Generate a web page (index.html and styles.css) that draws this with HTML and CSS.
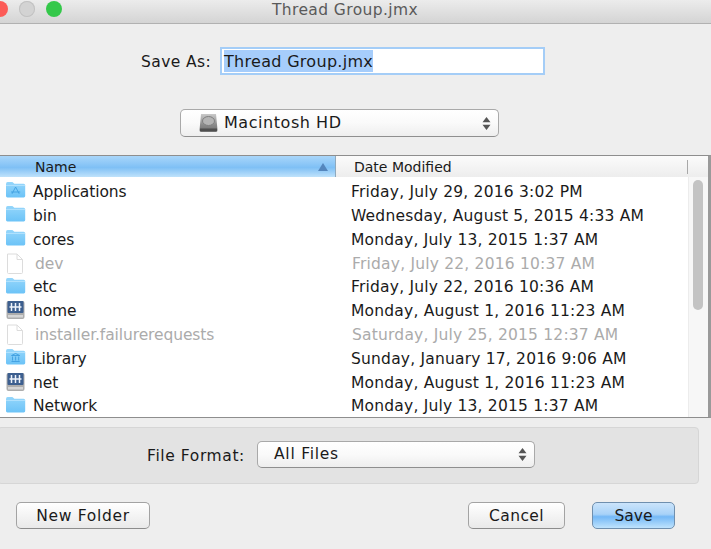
FILE: index.html
```html
<!DOCTYPE html>
<html lang="en">
<head>
<meta charset="utf-8">
<title>Thread Group.jmx</title>
<link rel="stylesheet" href="styles.css">
</head>
<body>
<svg class="defs" width="0" height="0" aria-hidden="true">
  <defs>
    <linearGradient id="fg" x1="0" y1="0" x2="0" y2="1"><stop offset="0" stop-color="#94d6fb"/><stop offset="1" stop-color="#6cc3f7"/></linearGradient>
    <linearGradient id="dg" x1="0" y1="0" x2="0" y2="1"><stop offset="0" stop-color="#c9c9c9"/><stop offset=".6" stop-color="#8b8b8b"/><stop offset="1" stop-color="#6e6e6e"/></linearGradient>
    <symbol id="folder" viewBox="0 0 21 17"><path d="M1 3.2Q1 1 2.6 1H7.4L9.4 2.8H18.6Q20.2 2.8 20.2 4.4V15Q20.2 16.4 18.8 16.4H2.4Q1 16.4 1 15Z" fill="url(#fg)"/><path d="M1 4.4H20.2" stroke="#b5e4fd" stroke-width="1"/></symbol>
    <symbol id="folder-apps" viewBox="0 0 21 17"><use href="#folder"/><path d="M10.600 6L7 12.800M10.600 6L14.200 12.800M6 11H15.200" fill="none" stroke="#3f9fe0" stroke-width=".9"/></symbol>
    <symbol id="folder-lib" viewBox="0 0 21 17"><use href="#folder"/><path d="M6.500 7.500L10.600 5.500L14.700 7.500ZM7.500 8.500V12.500M10.600 8.500V12.500M13.700 8.500V12.500M6.500 13.500H14.700" fill="none" stroke="#3f9fe0" stroke-width=".9"/></symbol>
    <symbol id="file" viewBox="0 0 21 21"><path d="M2.5 1H12L17.5 6.5V19.5Q17.5 20.5 16.5 20.5H3.5Q2.5 20.500 2.5 19.5Z" fill="#fff" stroke="#dcdcdc"/><path d="M12 1V6.5H17.5" fill="none" stroke="#dcdcdc"/></symbol>
    <symbol id="net" viewBox="0 0 19 20"><rect x=".5" y="1" width="18" height="18" rx="2" fill="#adadad"/><rect x="1.500" y="1" width="16" height="12" rx="1" fill="#3d5f8f"/><path d="M5.500 3V11M9.500 3V11M13.500 3V11M3.500 7H15.500" stroke="#eef3fa" stroke-width="1.500"/><rect x="2" y="15" width="15" height="2.500" fill="#d5d5d5"/></symbol>
  </defs>
</svg>
<div class="window">
  <header class="titlebar">
    <div class="lights"><span class="light red"></span><span class="light grey"></span><span class="light green"></span></div>
    <div class="title">Thread Group.jmx</div>
  </header>
  <main class="body">
    <div class="save-row">
      <label class="save-label">Save As:</label>
      <div class="name-input"><span class="selection">Thread Group.jmx</span></div>
    </div>
    <div class="location-row">
      <div class="select location">
        <svg class="hd" width="21" height="20" viewBox="0 0 21 20"><path d="M3 1H18L19.500 17Q19.500 19 18 19H3Q1.500 19 1.500 17Z" fill="url(#dg)"/><ellipse cx="10.500" cy="8" rx="6" ry="4.500" fill="#b4b4b4" stroke="#808080"/><rect x="2" y="15.500" width="17" height="2.500" fill="#4f4f4f"/></svg>
        <span class="select-text">Macintosh HD</span>
        <svg class="updown" width="9" height="15" viewBox="0 0 9 15"><path d="M4.500 1L8.500 6.200H.5ZM4.500 14L8.500 8.800H.5Z" fill="#555"/></svg>
      </div>
    </div>
    <section class="table">
      <div class="thead">
        <div class="th th-name"><span>Name</span><i class="sort"></i></div>
        <div class="th th-date"><span>Date Modified</span></div>
      </div>
      <div class="tbody">
        <div class="rows">
          <div class="row"><svg class="ic folder"><use href="#folder-apps"/></svg><span class="n">Applications</span><span class="d">Friday, July 29, 2016 3:02 PM</span></div>
          <div class="row"><svg class="ic folder"><use href="#folder"/></svg><span class="n">bin</span><span class="d">Wednesday, August 5, 2015 4:33 AM</span></div>
          <div class="row"><svg class="ic folder"><use href="#folder"/></svg><span class="n">cores</span><span class="d">Monday, July 13, 2015 1:37 AM</span></div>
          <div class="row off"><svg class="ic file"><use href="#file"/></svg><span class="n">dev</span><span class="d">Friday, July 22, 2016 10:37 AM</span></div>
          <div class="row"><svg class="ic folder"><use href="#folder"/></svg><span class="n">etc</span><span class="d">Friday, July 22, 2016 10:36 AM</span></div>
          <div class="row"><svg class="ic drive"><use href="#net"/></svg><span class="n">home</span><span class="d">Monday, August 1, 2016 11:23 AM</span></div>
          <div class="row off"><svg class="ic file"><use href="#file"/></svg><span class="n">installer.failurerequests</span><span class="d">Saturday, July 25, 2015 12:37 AM</span></div>
          <div class="row"><svg class="ic folder"><use href="#folder-lib"/></svg><span class="n">Library</span><span class="d">Sunday, January 17, 2016 9:06 AM</span></div>
          <div class="row"><svg class="ic drive"><use href="#net"/></svg><span class="n">net</span><span class="d">Monday, August 1, 2016 11:23 AM</span></div>
          <div class="row"><svg class="ic folder"><use href="#folder"/></svg><span class="n">Network</span><span class="d">Monday, July 13, 2015 1:37 AM</span></div>
        </div>
        <div class="scrollbar"><div class="thumb"></div></div>
      </div>
    </section>
    <section class="format-panel">
      <label class="format-label">File Format:</label>
      <div class="select format">
        <span class="select-text">All Files</span>
        <svg class="updown" width="9" height="15" viewBox="0 0 9 15"><path d="M4.500 1L8.500 6.200H.5ZM4.500 14L8.500 8.800H.5Z" fill="#555"/></svg>
      </div>
    </section>
    <footer class="actions">
      <button class="btn new-folder">New Folder</button>
      <div class="spacer"></div>
      <button class="btn cancel">Cancel</button>
      <button class="btn save">Save</button>
    </footer>
  </main>
</div>
</body>
</html>
```
FILE: styles.css
```css
* { box-sizing: border-box; }
html, body { margin: 0; padding: 0; }
body { width: 711px; height: 549px; overflow: hidden; background: #eeeeee; font-family: "DejaVu Sans", sans-serif; color: #1a1a1a; font-size: 15.5px; letter-spacing: .4px; }
.defs { display: block; height: 0; }
.window { width: 711px; height: 549px; display: flex; flex-direction: column; }
.titlebar { height: 24px; flex: none; display: flex; align-items: center; justify-content: center; background: linear-gradient(#ececec, #d4d4d4); border-bottom: 1px solid #b1b1b1; position: relative; padding-right: 21px; }
.lights { position: absolute; left: -8px; top: 1px; display: flex; gap: 11px; }
.light { width: 16px; height: 16px; border-radius: 50%; }
.red { background: #fc5b57; }
.grey { background: #d3d3d3; box-shadow: inset 0 0 0 1px #c2c2c2; }
.green { background: #34c84a; }
.title { color: #5a5a5a; font-size: 15.5px; margin-top: -4px; letter-spacing: .4px; }
.body { flex: 1; display: flex; flex-direction: column; min-height: 0; }
.save-row { display: flex; align-items: center; margin: 23px 0 0 141px; height: 28px; }
.save-label { width: 79px; padding-top: 2px; }
.name-input { width: 325px; height: 28px; background: #fff; border: 2px solid #a4cdf7; padding: 1px 2px; display: flex; align-items: center; font-size: 16px; letter-spacing: .3px; }
.selection { background: #a6cdfb; line-height: 24px; height: 22px; }
.location-row { margin: 34px 0 0 180px; }
.select { display: flex; align-items: center; background: linear-gradient(#ffffff 0%, #fafafa 50%, #eeeeee 100%); border: 1px solid #a9a9a9; border-bottom-color: #8f8f8f; border-radius: 5px; position: relative; }
.location { width: 319px; height: 28px; padding-left: 17px; font-size: 16px; letter-spacing: .55px; }
.hd { margin-right: 5px; }
.updown { position: absolute; right: 7px; top: 50%; margin-top: -7.5px; }
.table { margin-top: 18px; height: 263px; flex: none; background: #fff; border-top: 1px solid #8e8e8e; border-bottom: 1px solid #8e8e8e; border-right: 3px solid #9a9a9a; display: flex; flex-direction: column; }
.thead { height: 21px; flex: none; display: flex; font-size: 14px; line-height: 20px; letter-spacing: 0; }
.th { height: 21px; display: flex; align-items: center; }
.th-name { width: 336px; padding-left: 35px; background: linear-gradient(#a9d6fa, #7fc0f5 55%, #bfe2fb); border-right: 1px solid #8fa9bd; position: relative; }
.sort { position: absolute; right: 7px; top: 7px; width: 0; height: 0; border-left: 5px solid transparent; border-right: 5px solid transparent; border-bottom: 8px solid #5486bd; }
.th-date { flex: 1; padding-left: 18px; background: linear-gradient(#fbfbfb, #ededed); position: relative; }
.th-date::after { content: ""; position: absolute; right: 20px; top: 4px; height: 14px; width: 1px; background: #a8a8a8; }
.tbody { flex: 1; display: flex; min-height: 0; }
.rows { flex: 1; padding-top: 3.400px; }
.row { height: 23.800px; display: flex; align-items: center; position: relative; padding-left: 33px; white-space: nowrap; }
.ic { position: absolute; left: 5px; top: 1px; }
.ic.folder { width: 21px; height: 17px; }
.ic.file { width: 21px; height: 21px; }
.ic.drive { width: 19px; height: 20px; left: 6px; }
.n { width: 318px; flex: none; letter-spacing: -.1px; }
.d { letter-spacing: .2px; }
.off { color: #ababab; }
.off .n { padding-left: 2px; }
.off .d { padding-left: 1px; }
.scrollbar { width: 20px; flex: none; background: #f7f7f7; border-left: 1px solid #ececec; padding: 3px 4px 0 4px; }
.thumb { width: 10px; height: 130px; background: #c3c3c3; border-radius: 5px; }
.format-panel { margin: 9px 12px 0 -3px; height: 57px; background: #e3e3e3; border: 1px solid #d6d6d6; border-radius: 4px; display: flex; align-items: center; padding-left: 149px; flex: none; }
.format-label { width: 110px; padding-top: 1px; letter-spacing: .6px; }
.format { width: 278px; height: 27px; padding-left: 16px; margin-top: -2px; letter-spacing: .75px; }
.select-text { position: relative; top: -1px; }
.format .updown { right: 7px; }
.actions { display: flex; margin: 18px 36px 0 16px; gap: 27px; }
.spacer { flex: 1; }
.btn { font: inherit; letter-spacing: inherit; color: #1a1a1a; height: 27px; padding: 0; border: 1px solid #a3a3a3; border-bottom-color: #8c8c8c; border-radius: 5px; background: linear-gradient(#ffffff, #f4f4f4 50%, #e9e9e9); }
.new-folder { width: 134px; letter-spacing: .7px; }
.cancel { width: 97px; }
.save { width: 83px; letter-spacing: 0; background: linear-gradient(#cbe4fb, #a8d2f8 45%, #74b8f6 55%, #bfe3fd); border-color: #6f8fae; }
```
